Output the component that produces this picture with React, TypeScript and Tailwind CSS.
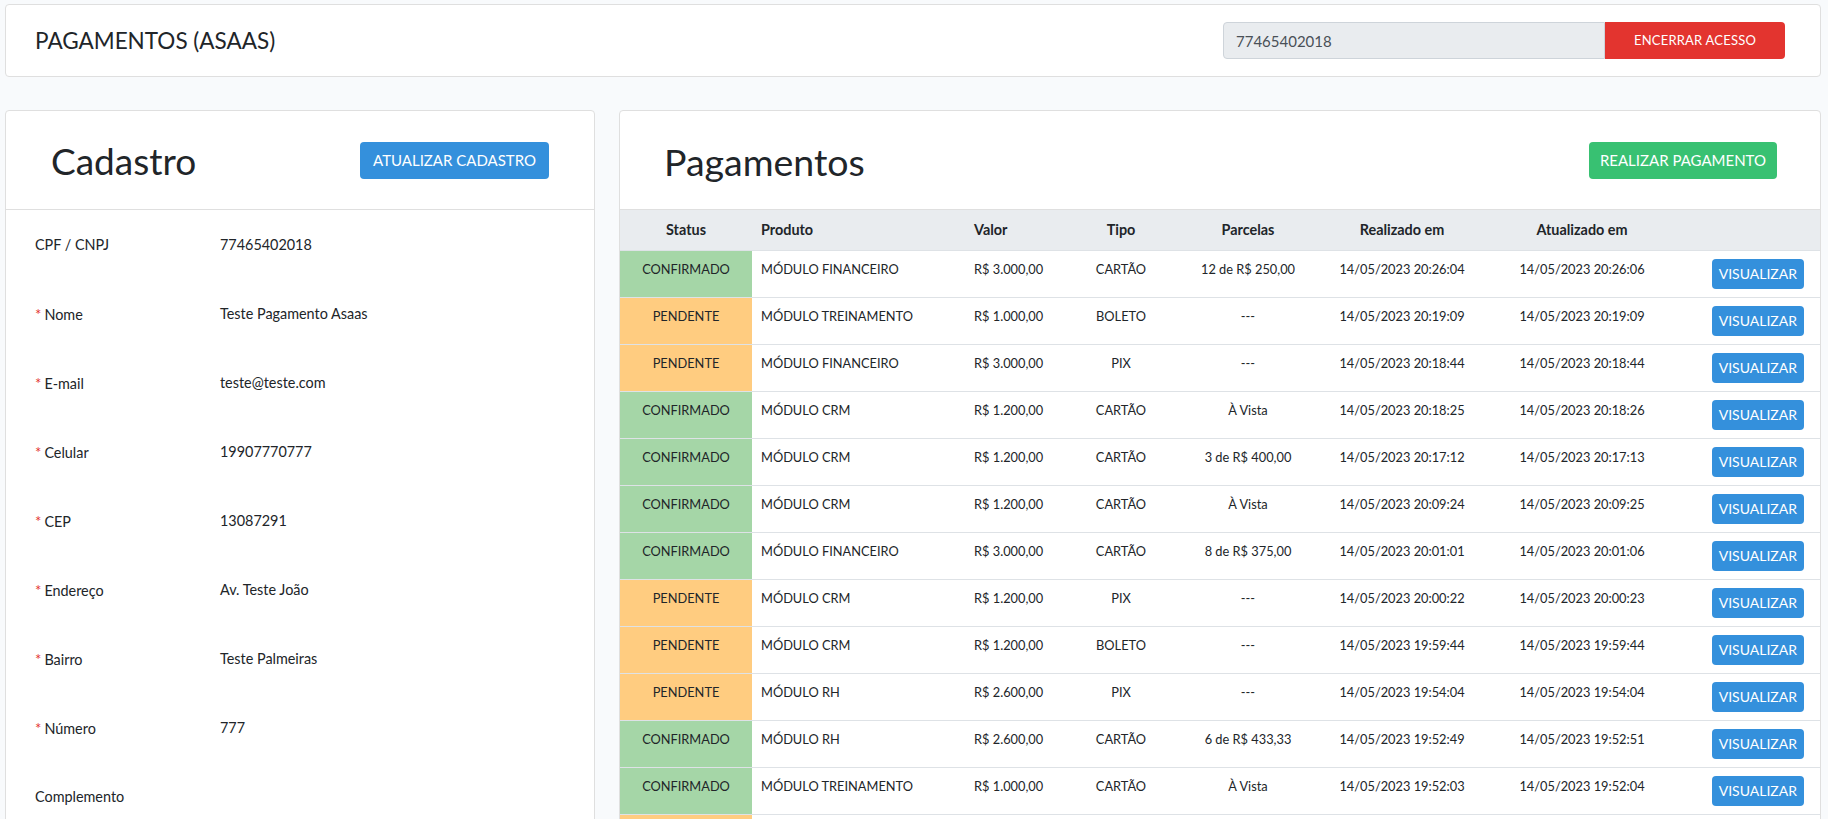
import React from 'react';

type Row = [string, string, string, string, string, string, string];

const PAYMENTS: Row[] = [
  ['CONFIRMADO', 'MÓDULO FINANCEIRO', 'R$ 3.000,00', 'CARTÃO', '12 de R$ 250,00', '14/05/2023 20:26:04', '14/05/2023 20:26:06'],
  ['PENDENTE', 'MÓDULO TREINAMENTO', 'R$ 1.000,00', 'BOLETO', '---', '14/05/2023 20:19:09', '14/05/2023 20:19:09'],
  ['PENDENTE', 'MÓDULO FINANCEIRO', 'R$ 3.000,00', 'PIX', '---', '14/05/2023 20:18:44', '14/05/2023 20:18:44'],
  ['CONFIRMADO', 'MÓDULO CRM', 'R$ 1.200,00', 'CARTÃO', 'À Vista', '14/05/2023 20:18:25', '14/05/2023 20:18:26'],
  ['CONFIRMADO', 'MÓDULO CRM', 'R$ 1.200,00', 'CARTÃO', '3 de R$ 400,00', '14/05/2023 20:17:12', '14/05/2023 20:17:13'],
  ['CONFIRMADO', 'MÓDULO CRM', 'R$ 1.200,00', 'CARTÃO', 'À Vista', '14/05/2023 20:09:24', '14/05/2023 20:09:25'],
  ['CONFIRMADO', 'MÓDULO FINANCEIRO', 'R$ 3.000,00', 'CARTÃO', '8 de R$ 375,00', '14/05/2023 20:01:01', '14/05/2023 20:01:06'],
  ['PENDENTE', 'MÓDULO CRM', 'R$ 1.200,00', 'PIX', '---', '14/05/2023 20:00:22', '14/05/2023 20:00:23'],
  ['PENDENTE', 'MÓDULO CRM', 'R$ 1.200,00', 'BOLETO', '---', '14/05/2023 19:59:44', '14/05/2023 19:59:44'],
  ['PENDENTE', 'MÓDULO RH', 'R$ 2.600,00', 'PIX', '---', '14/05/2023 19:54:04', '14/05/2023 19:54:04'],
  ['CONFIRMADO', 'MÓDULO RH', 'R$ 2.600,00', 'CARTÃO', '6 de R$ 433,33', '14/05/2023 19:52:49', '14/05/2023 19:52:51'],
  ['CONFIRMADO', 'MÓDULO TREINAMENTO', 'R$ 1.000,00', 'CARTÃO', 'À Vista', '14/05/2023 19:52:03', '14/05/2023 19:52:04'],
];

const FIELDS: { label: string; value: string; required: boolean }[] = [
  { label: 'CPF / CNPJ', value: '77465402018', required: false },
  { label: 'Nome', value: 'Teste Pagamento Asaas', required: true },
  { label: 'E-mail', value: 'teste@teste.com', required: true },
  { label: 'Celular', value: '19907770777', required: true },
  { label: 'CEP', value: '13087291', required: true },
  { label: 'Endereço', value: 'Av. Teste João', required: true },
  { label: 'Bairro', value: 'Teste Palmeiras', required: true },
  { label: 'Número', value: '777', required: true },
  { label: 'Complemento', value: '', required: false },
];

export default function App() {
  return (
    <div className="h-[819px] overflow-hidden bg-[#f8fafc] pt-[4px] pl-[5px] pr-[7px] text-[#212529] font-['Lato','Noto_Sans',sans-serif] text-[14.4px] leading-[1.6]">
      {/* Top bar */}
      <div className="h-[73px] bg-white border border-[#dfdfdf] rounded flex items-center justify-between pl-[29px] pr-[35px]">
        <h4 className="text-[22.5px] leading-[1.2]">PAGAMENTOS (ASAAS)</h4>
        <div className="flex h-[37px]">
          <div className="w-[382px] bg-[#e9ecef] border border-[#ced4da] rounded-l flex items-center pl-[12px] text-[15px] text-[#495057]">
            77465402018
          </div>
          <button className="w-[180px] bg-[#e3342f] text-white rounded-r text-[13px] tracking-[0.2px]">ENCERRAR ACESSO</button>
        </div>
      </div>

      <div className="mt-[33px] flex gap-[24px] items-start">
        {/* Cadastro */}
        <div className="w-[590px] h-[900px] bg-white border border-[#dfdfdf] rounded">
          <div className="h-[99px] border-b border-[#dfdfdf] flex items-center justify-between pl-[45px] pr-[45px]">
            <h1 className="text-[37px] leading-[1.2] pt-[2px]">Cadastro</h1>
            <button className="h-[37px] px-[13px] bg-[#3490dc] text-white rounded text-[15px]">ATUALIZAR CADASTRO</button>
          </div>
          <div className="pt-[23px] pl-[29px]">
            {FIELDS.map((f) => (
              <div key={f.label} className="h-[69px] flex">
                <div className="w-[185px]">
                  {f.required && <span className="text-[#e3342f] text-[15px] mr-[3px]">*</span>}
                  {f.label}
                </div>
                <div>{f.value}</div>
              </div>
            ))}
          </div>
        </div>

        {/* Pagamentos */}
        <div className="flex-1 h-[900px] bg-white border border-[#dfdfdf] rounded overflow-hidden">
          <div className="h-[99px] border-b border-[#dfdfdf] flex items-center justify-between pl-[44px] pr-[43px]">
            <h1 className="text-[37.5px] leading-[1.2] pt-[2px]">Pagamentos</h1>
            <button className="h-[37px] px-[11px] bg-[#38c172] text-white rounded text-[15px]">REALIZAR PAGAMENTO</button>
          </div>
          <table className="w-full table-fixed text-[12.8px]">
            <thead>
              <tr className="bg-[#e9ecef] border-b border-[#dee2e6] h-[40px] text-[14.4px] font-bold">
                <th className="w-[132px] text-center">Status</th>
                <th className="w-[213px] text-left pl-[9px]">Produto</th>
                <th className="w-[106px] text-left pl-[9px]">Valor</th>
                <th className="w-[100px] text-center">Tipo</th>
                <th className="w-[154px] text-center">Parcelas</th>
                <th className="w-[154px] text-center">Realizado em</th>
                <th className="w-[206px] text-center">Atualizado em</th>
                <th></th>
              </tr>
            </thead>
            <tbody>
              {PAYMENTS.map((r, i) => (
                <tr key={i} className="border-b border-[#dee2e6] align-top leading-[20px]">
                  <td className={`py-2 text-center ${r[0] === 'CONFIRMADO' ? 'bg-[#a5d6a7]' : 'bg-[#ffcc80]'}`}>{r[0]}</td>
                  <td className="py-2 pl-[9px]">{r[1]}</td>
                  <td className="py-2 pl-[9px]">{r[2]}</td>
                  <td className="py-2 text-center">{r[3]}</td>
                  <td className="py-2 text-center">{r[4]}</td>
                  <td className="py-2 text-center">{r[5]}</td>
                  <td className="py-2 text-center">{r[6]}</td>
                  <td className="py-2 pr-[16px] text-right">
                    <button className="h-[30px] px-[7px] bg-[#3490dc] text-white rounded text-[14px]">VISUALIZAR</button>
                  </td>
                </tr>
              ))}
              <tr className="h-[46px]">
                <td className="bg-[#ffcc80]"></td>
                <td colSpan={7}></td>
              </tr>
            </tbody>
          </table>
        </div>
      </div>
    </div>
  );
}
